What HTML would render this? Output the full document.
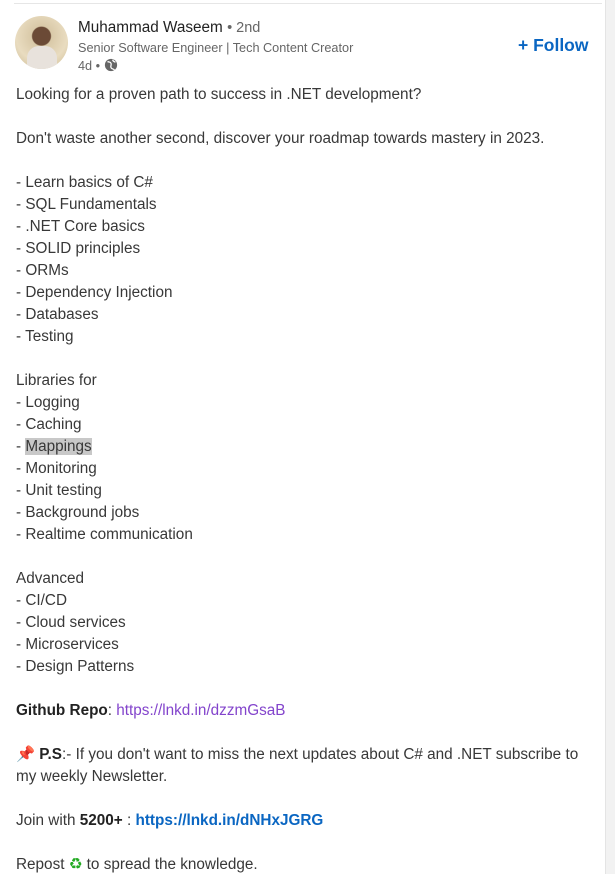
<!DOCTYPE html>
<html><head><meta charset="utf-8"><style>
html,body{margin:0;padding:0;background:#fff;width:615px;height:874px;overflow:hidden;position:relative;font-family:"Liberation Sans",sans-serif;}
.top{position:absolute;left:14px;top:3px;width:588px;height:1px;background:#e6e6e6}
.side{position:absolute;right:0;top:0;width:9px;height:874px;background:#f2f2f2;border-left:1px solid #e4e4e4}
.av{position:absolute;left:15px;top:16px;width:53px;height:53px;border-radius:50%;background:radial-gradient(circle at 50% 38%,#6b4a36 0 9px,#d9c9a8 10px,#e9dcc0 60%,#cbb990);overflow:hidden}
.av:after{content:"";position:absolute;left:12px;top:30px;width:30px;height:30px;border-radius:40% 40% 0 0;background:#e8e2dc}
.name{position:absolute;left:78px;top:19px;font-size:15.3px;color:#222}
.name span{color:#666;font-size:14.5px}
.sub{position:absolute;left:78px;top:41px;font-size:12.7px;color:#666}
.time{position:absolute;left:78px;top:58px;font-size:12.7px;color:#666}
.follow{position:absolute;left:518px;top:35px;font-size:17.5px;color:#0a66c2;font-weight:bold}
.body{position:absolute;left:16px;top:84px;width:590px;font-size:15.3px;line-height:22px;color:#383838;white-space:pre-line}
.hl{background:#c8c8c8}
b{color:#222}
.l1{color:#8344cc}
.l2{color:#0a66c2;font-weight:bold}
</style></head><body>
<div class="top"></div><div class="side"></div>
<div class="av"></div>
<div class="name">Muhammad Waseem <span>• 2nd</span></div>
<div class="sub">Senior Software Engineer | Tech Content Creator</div>
<div class="time">4d • <svg width="14" height="14" viewBox="0 0 16 16" style="vertical-align:-2px"><circle cx="8" cy="8" r="7" fill="#666"/><path d="M4 4c2 1 3 0 4 2s-1 3 0 5 3 1 4 3M10 2c0 2 2 2 3 3" stroke="#fff" stroke-width="1.5" fill="none"/></svg></div>
<div class="follow">+ Follow</div>
<div class="body">Looking for a proven path to success in .NET development?

Don't waste another second, discover your roadmap towards mastery in 2023.

- Learn basics of C#
- SQL Fundamentals
- .NET Core basics
- SOLID principles
- ORMs
- Dependency Injection
- Databases
- Testing

Libraries for
- Logging
- Caching
- <span class="hl">Mappings</span>
- Monitoring
- Unit testing
- Background jobs
- Realtime communication

Advanced
- CI/CD
- Cloud services
- Microservices
- Design Patterns

<b>Github Repo</b>: <span class="l1">https://lnkd.in/dzzmGsaB</span>

<span style="color:#d33">📌</span> <b>P.S</b>:- If you don't want to miss the next updates about C# and .NET subscribe to
my weekly Newsletter.

Join with <b>5200+</b> : <span class="l2">https://lnkd.in/dNHxJGRG</span>

Repost <span style="color:#2a2">♻</span> to spread the knowledge.</div>
</body></html>
